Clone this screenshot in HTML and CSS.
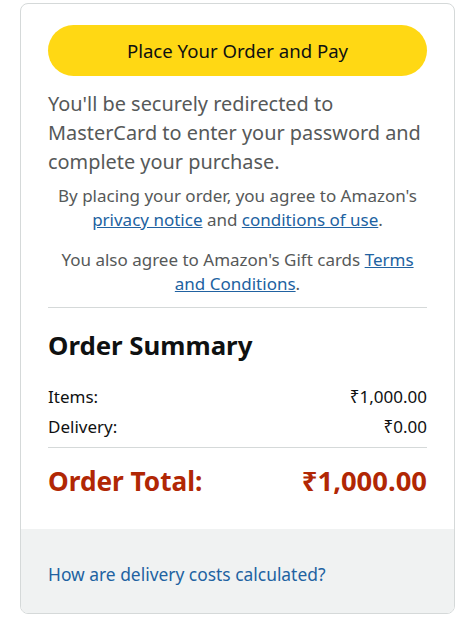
FILE: index.html
```html
<!DOCTYPE html>
<html lang="en">
<head>
<meta charset="utf-8">
<link rel="stylesheet" href="styles.css">
</head>
<body>
<div class="card">
  <div class="main">
    <button class="pay-btn">Place Your Order and Pay</button>
    <p class="redirect">You'll be securely redirected to MasterCard to enter your password and complete your purchase.</p>
    <p class="legal">By placing your order, you agree to Amazon's <a href="#">privacy notice</a> and <a href="#">conditions of use</a>.</p>
    <p class="legal gift">You also agree to Amazon's Gift cards <a href="#">Terms and Conditions</a>.</p>
    <hr class="divider">
    <h2 class="summary-title">Order Summary</h2>
    <div class="row"><span>Items:</span><span>₹1,000.00</span></div>
    <div class="row"><span>Delivery:</span><span>₹0.00</span></div>
    <hr class="divider total-div">
    <div class="total"><span>Order Total:</span><span class="total-amt">₹1,000.00</span></div>
  </div>
  <div class="foot">
    <a href="#">How are delivery costs calculated?</a>
  </div>
</div>
</body>
</html>
```

FILE: styles.css
```css
* { box-sizing: border-box; }
body {
  margin: 0;
  background: #fff;
  font-family: "Noto Sans", "Open Sans", sans-serif;
  color: #0f1111;
}
.card {
  margin: 3px 0 0 20px;
  width: 435px;
  border: 1px solid #d5d9d9;
  border-radius: 8px;
  overflow: hidden;
}
.main {
  padding: 21px 27px 30px 27px;
}
.pay-btn {
  display: block;
  width: 100%;
  height: 51px;
  border: none;
  border-radius: 26px;
  background: #ffd814;
  font-family: inherit;
  font-size: 18.6px;
  color: #0f1111;
  padding: 0;
}
.redirect {
  margin: 13px 0 0;
  font-size: 19.9px;
  line-height: 29px;
  color: #565959;
}
.legal {
  margin: 8px 0 0;
  font-size: 17px;
  line-height: 24px;
  text-align: center;
  color: #565959;
}
.legal.gift { margin-top: 16px; }
.legal a, .foot a {
  color: #2162a1;
}
.divider {
  border: none;
  border-top: 1px solid #d5d9d9;
  margin: 11px 0 0;
}
.summary-title {
  margin: 19px 0 0;
  font-size: 25.8px;
  line-height: 36px;
  font-weight: 700;
  color: #0f1111;
}
.row {
  display: flex;
  justify-content: space-between;
  font-size: 17px;
  line-height: 30px;
}
.summary-title + .row { margin-top: 19px; }
.total-div { margin-top: 5px; }
.total {
  display: flex;
  justify-content: space-between;
  align-items: baseline;
  margin-top: 15px;
  font-size: 26.2px;
  line-height: 36px;
  font-weight: 700;
  color: #b12704;
}
.total-amt { font-size: 27.4px; }
.foot {
  background: #f0f2f2;
  padding: 33px 27px 27px;
  font-size: 17.4px;
  line-height: 24px;
}
.foot a { text-decoration: none; }
```
